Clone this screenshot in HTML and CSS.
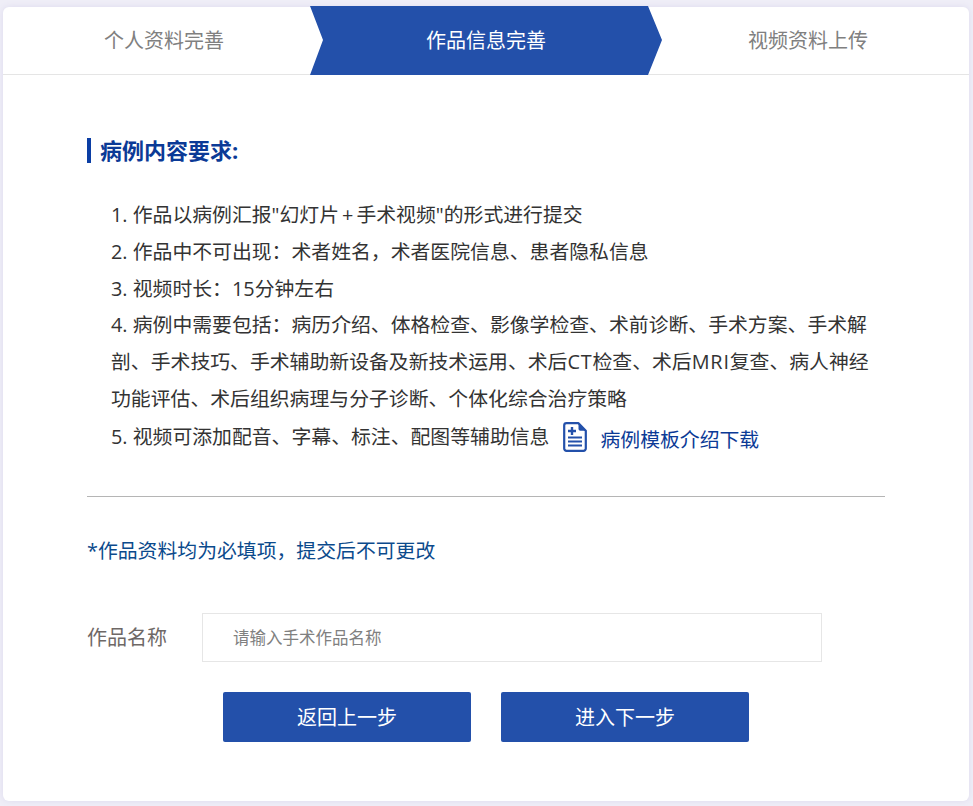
FILE: index.html
```html
<!DOCTYPE html>
<html lang="zh-CN">
<head>
<meta charset="utf-8">
<title>作品信息完善</title>
<link rel="stylesheet" href="styles.css">
</head>
<body>
<main class="card">
  <nav class="steps">
    <div class="step">个人资料完善</div>
    <div class="step step-active">作品信息完善</div>
    <div class="step">视频资料上传</div>
  </nav>
  <section class="content">
    <h2 class="heading">病例内容要求:</h2>
    <ol class="reqs">
      <li>1. 作品以病例汇报"幻灯片<span class="plus">+</span>手术视频"的形式进行提交</li>
      <li>2. 作品中不可出现：术者姓名，术者医院信息、患者隐私信息</li>
      <li>3. 视频时长：15分钟左右</li>
      <li>4. 病例中需要包括：病历介绍、体格检查、影像学检查、术前诊断、手术方案、手术解剖、手术技巧、手术辅助新设备及新技术运用、术后<span class="abbr">CT</span>检查、术后<span class="abbr">MRI</span>复查、病人神经功能评估、术后组织病理与分子诊断、个体化综合治疗策略</li>
      <li class="req-last">5. 视频可添加配音、字幕、标注、配图等辅助信息
        <a class="download" href="#">
          <svg class="doc-icon" viewBox="0 0 24 30" width="24" height="30" aria-hidden="true">
            <path d="M3.5 1.2H15.5L22.8 8.8V26.5a2.3 2.3 0 0 1-2.3 2.3H3.5a2.3 2.3 0 0 1-2.3-2.3V3.5a2.3 2.3 0 0 1 2.3-2.3Z" fill="none" stroke="#2350aa" stroke-width="2.2" stroke-linejoin="round"/>
            <path d="M15.5 1.2V7a1.8 1.8 0 0 0 1.8 1.8h5.5Z" fill="#2350aa"/>
            <path d="M9 5v8M5 9h8" stroke="#2350aa" stroke-width="2.4" fill="none"/>
            <path d="M5 15.5h14M5 19.5h14M5 23.5h14" stroke="#2350aa" stroke-width="2" fill="none"/>
          </svg>
          <span class="download-text">病例模板介绍下载</span>
        </a>
      </li>
    </ol>
    <hr class="divider">
    <p class="notice">*作品资料均为必填项，提交后不可更改</p>
    <div class="field">
      <label class="field-label" for="work-name">作品名称</label>
      <input class="field-input" id="work-name" type="text" placeholder="请输入手术作品名称">
    </div>
    <div class="actions">
      <button class="btn" type="button">返回上一步</button>
      <button class="btn" type="button">进入下一步</button>
    </div>
  </section>
</main>
</body>
</html>
```
FILE: styles.css
```css
* {
  box-sizing: border-box;
}

html,
body {
  margin: 0;
  height: 100%;
}

body {
  background: #efeef7;
  padding: 7px 4px 5px 3px;
  font-family: "Open Sans", "Noto Sans CJK SC", sans-serif;
  font-size: 20px;
  color: #333;
  overflow: hidden;
}

.card {
  height: 794px;
  background: #fff;
  border-radius: 6px;
  box-shadow: 0 0 6px #dedbee;
}

.steps {
  display: grid;
  grid-template-columns: repeat(3, 1fr);
  height: 68px;
  border-bottom: 1px solid #e5e5e5;
}

.step {
  display: flex;
  align-items: center;
  justify-content: center;
  color: #808080;
  line-height: 66px;
}

.step-active {
  margin: -1px -15px -1px;
  height: 69px;
  background: #2350aa;
  color: #fff;
  clip-path: polygon(0 0, 338px 0, 352px 34px, 338px 100%, 0 100%, 13px 34px);
}

.content {
  padding: 0 84px;
}

.heading {
  margin: 63px 0 0;
  height: 25px;
  border-left: 4px solid #0b3ea4;
  padding-left: 9px;
  font-size: 22px;
  font-weight: 700;
  line-height: 25px;
  color: #0b3a96;
}

.reqs {
  list-style: none;
  margin: 34px 0 0;
  padding: 0 4px 0 24px;
  font-size: 19.85px;
}

.reqs li {
  line-height: 36.8px;
}

.plus {
  padding: 0 3px;
}

.abbr {
  letter-spacing: 0.8px;
}

.reqs .req-last {
  display: flex;
  align-items: center;
  margin-top: 1px;
  white-space: nowrap;
}

.download {
  display: inline-flex;
  align-items: center;
  margin-left: 14px;
  color: #0b3a96;
  text-decoration: none;
}

.doc-icon {
  margin-right: 13px;
}

.download-text {
  margin: 3px 0 -3px;
}

.divider {
  margin: 40px 0 0;
  border: 0;
  border-top: 1px solid #b5b5b5;
}

.notice {
  margin: 40px 0 0;
  font-size: 19.85px;
  line-height: 28px;
  color: #0b4a8c;
}

.field {
  display: flex;
  align-items: center;
  margin-top: 48px;
}

.field-label {
  width: 115px;
  line-height: 49px;
  color: #6e6866;
}

.field-input {
  width: 620px;
  height: 49px;
  border: 1px solid #e6e6e6;
  padding: 0 30px;
  font-family: inherit;
  font-size: 16.5px;
  color: #333;
  outline: none;
}

.field-input::placeholder {
  color: #808080;
  opacity: 1;
}

.actions {
  display: flex;
  justify-content: center;
  gap: 30px;
  margin-top: 30px;
}

.btn {
  width: 248px;
  height: 50px;
  border: 0;
  border-radius: 2px;
  background: #2350aa;
  color: #fff;
  font-family: inherit;
  font-size: 20px;
}
```
